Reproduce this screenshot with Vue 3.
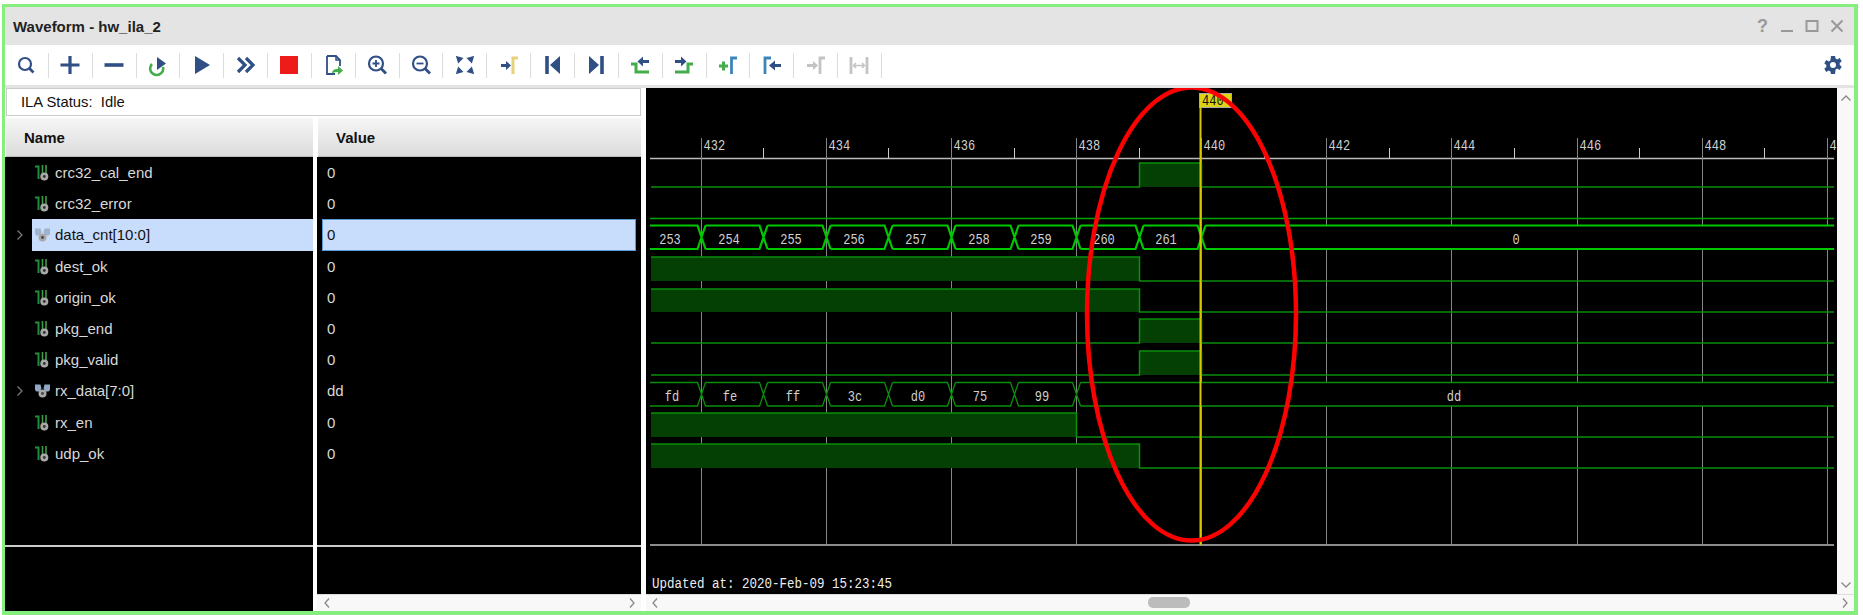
<template>
  <div class="win">
    <div class="titlebar">
      <span class="title">Waveform - hw_ila_2</span>
      <div class="winbtns">
        <span class="help">?</span>
        <svg width="14" height="14" viewBox="0 0 14 14"><path d="M1 12h12" stroke="#999" stroke-width="2" /></svg>
        <svg width="14" height="14" viewBox="0 0 14 14"><rect x="1.5" y="2" width="11" height="10" fill="none" stroke="#999" stroke-width="2" /></svg>
        <svg width="14" height="14" viewBox="0 0 14 14"><path d="M1.5 1.5l11 11M12.5 1.5l-11 11" stroke="#999" stroke-width="2" /></svg>
      </div>
    </div>

    <div class="toolbar">
      <div v-for="t in tools" :key="t.id" class="tool">
        <svg width="24" height="24" viewBox="0 0 24 24" v-html="t.svg"></svg>
      </div>
      <svg class="gear" width="22" height="22" viewBox="0 0 22 22">
        <path
          fill="#2f4f85"
          fill-rule="evenodd"
          d="M9 2h4l.6 2.6 1.7.8 2.4-1.3 2 3.2-2 1.8v1.8l2 1.8-2 3.2-2.4-1.3-1.7.8L13 20H9l-.6-2.6-1.7-.8-2.4 1.3-2-3.2 2-1.8V11.1l-2-1.8 2-3.2 2.4 1.3 1.7-.8zM11 8a3 3 0 1 0 0 6 3 3 0 0 0 0-6z"
        />
      </svg>
    </div>

    <div class="main">
      <div class="left">
        <div class="status">ILA Status:&nbsp; Idle</div>
        <div class="cols">
          <div class="col col-name">
            <div class="head">Name</div>
            <div class="rows">
              <div
                v-for="s in signals"
                :key="s.name"
                class="row"
                :class="{ sel: s.selected }"
              >
                <svg v-if="s.bus" class="chev" width="8" height="12" viewBox="0 0 8 12"><path d="M1.500 1.500L6 6l-4.500 4.500" fill="none" stroke="#777" stroke-width="1.300" /></svg>
                <svg v-if="s.bus" class="sigicon" width="15" height="16" viewBox="0 0 15 16">
                  <path d="M0 1.500h5.500l1 4-2 3H1.500L0 7zM15 1.500H9.500l-1 4 2 3h3L15 7z" :fill="s.selected ? '#9fb3cc' : '#8fa6c4'" />
                  <circle cx="7.500" cy="10.500" r="4" fill="#a8a8a8" />
                  <circle cx="7.500" cy="10.500" r="1.400" fill="#444" />
                </svg>
                <svg v-else class="sigicon" width="15" height="17" viewBox="0 0 15 17">
                  <path d="M0 2.500h3.500V15" fill="none" stroke="#1d8f3a" stroke-width="2" />
                  <path d="M7.500 1v9M11 1v9" stroke="#3f9a4a" stroke-width="1.600" />
                  <circle cx="9.300" cy="12.500" r="4" fill="#a8a8a8" />
                  <circle cx="9.300" cy="12.500" r="1.400" fill="#333" />
                </svg>
                <span class="sname">{{ s.name }}</span>
              </div>
            </div>
            <div class="tail"></div>
          </div>
          <div class="col col-value">
            <div class="head">Value</div>
            <div class="rows">
              <div
                v-for="s in signals"
                :key="s.name"
                class="row"
              >
                <span class="val" :class="{ selval: s.selected }">{{ s.value }}</span>
              </div>
            </div>
            <div class="tail"></div>
            <div class="hscroll value-scroll">
              <span class="arr">
                <svg width="8" height="12" viewBox="0 0 8 12"><path d="M6 1.500L2 6l4 4.500" fill="none" stroke="#888" stroke-width="1.300" /></svg>
              </span>
              <span class="arr">
                <svg width="8" height="12" viewBox="0 0 8 12"><path d="M2 1.500L6 6l-4 4.500" fill="none" stroke="#888" stroke-width="1.300" /></svg>
              </span>
            </div>
          </div>
        </div>
      </div>

      <div class="right">
        <div class="wave-top">
          <svg class="wave" width="1191" height="506" viewBox="646 88 1191 506">
            <rect x="646" y="88" width="1191" height="506" fill="#000" />

            <!-- ruler -->
            <path d="M650 158.500H1834M650 545H1834" stroke="#bbb" stroke-width="1.500" />
            <path
              v-for="t in majors"
              :key="'g' + t"
              :d="`M${xOf(t)} 138V545`"
              stroke="#858585"
              stroke-width="1"
            />
            <path
              v-for="t in minors"
              :key="'m' + t"
              :d="`M${xOf(t)} 148V158`"
              stroke="#ccc"
              stroke-width="1"
            />
            <text
              v-for="t in majors"
              :key="'l' + t"
              :x="xOf(t) + 2"
              y="150"
              class="mono"
              :textLength="t === 450 ? 7.2 : 21.6"
              lengthAdjust="spacingAndGlyphs"
            >{{ t === 450 ? '4' : t }}</text>

            <!-- one bit signals -->
            <g v-for="(w, i) in bits" :key="i">
              <path
                v-for="(r, j) in w.highs"
                :key="j"
                :d="`M${r[0]} ${w.low}V${w.high}H${r[1]}V${w.low}Z`"
                fill="#043f04"
              />
              <path :d="bitPath(w)" fill="none" stroke="#0a8f0a" stroke-width="1.500" />
            </g>
            <path d="M650 218.500H1834" stroke="#00a600" stroke-width="1.500" />

            <!-- buses -->
            <path
              v-for="(p, i) in busFill(225, 249, cntEdges)"
              :key="'cf' + i"
              :d="p"
              fill="#000"
            />
            <path :d="busPath(225.500, 249, cntEdges)" fill="none" stroke="#00c800" stroke-width="2.200" />
            <text
              v-for="l in cntLabels"
              :key="l.t"
              :x="l.x"
              y="244"
              class="mono center"
              :textLength="l.t.length * 7.2"
              lengthAdjust="spacingAndGlyphs"
            >{{ l.t }}</text>

            <path
              v-for="(p, i) in busFill(382, 406, rxEdges)"
              :key="'rf' + i"
              :d="p"
              fill="#000"
            />
            <path :d="busPath(382.500, 406, rxEdges)" fill="none" stroke="#0a8f0a" stroke-width="1.300" />
            <text
              v-for="l in rxLabels"
              :key="l.t"
              :x="l.x"
              y="401"
              class="mono center"
              :textLength="l.t.length * 7.2"
              lengthAdjust="spacingAndGlyphs"
            >{{ l.t }}</text>

            <text
              x="652"
              y="588"
              class="mono updated"
              textLength="240"
              lengthAdjust="spacingAndGlyphs"
            >Updated at: 2020-Feb-09 15:23:45</text>

            <!-- cursor -->
            <rect x="1199.500" y="93.500" width="32" height="14" fill="#dcd414" stroke="#aaa" />
            <text x="1202" y="105" class="mono flag" textLength="21.6" lengthAdjust="spacingAndGlyphs">440</text>
            <path d="M1200.500 107V545" stroke="#d8c800" stroke-width="2" />

            <ellipse
              cx="1191.500"
              cy="314"
              rx="104.500"
              ry="226.500"
              fill="none"
              stroke="#f00"
              stroke-width="4.500"
            />
          </svg>
          <div class="vscroll">
            <svg width="12" height="8" viewBox="0 0 12 8"><path d="M1.500 6.500L6 2l4.500 4.500" fill="none" stroke="#888" stroke-width="1.300" /></svg>
            <svg width="12" height="8" viewBox="0 0 12 8"><path d="M1.500 1.500L6 6l4.500-4.500" fill="none" stroke="#888" stroke-width="1.300" /></svg>
          </div>
        </div>
        <div class="hscroll wave-scroll">
          <span class="arr">
            <svg width="8" height="12" viewBox="0 0 8 12"><path d="M6 1.500L2 6l4 4.500" fill="none" stroke="#888" stroke-width="1.300" /></svg>
          </span>
          <span class="thumb"></span>
          <span class="arr">
            <svg width="8" height="12" viewBox="0 0 8 12"><path d="M2 1.500L6 6l-4 4.500" fill="none" stroke="#888" stroke-width="1.300" /></svg>
          </span>
        </div>
      </div>
    </div>
  </div>
</template>

<script setup>
const navy = '#2f4f85'
const green = '#43ad4b'

const tools = [
  { id: 'search', svg: `<circle cx="11" cy="11" r="6" fill="none" stroke="${navy}" stroke-width="2.200"/><path d="M15.500 15.500l4 4" stroke="${navy}" stroke-width="2.600"/>` },
  { id: 'plus', svg: `<path d="M12 3v18M2.500 12h19" stroke="${navy}" stroke-width="3.200"/>` },
  { id: 'minus', svg: `<path d="M2.500 12h19" stroke="${navy}" stroke-width="3.600"/>` },
  { id: 'rerun', svg: `<path d="M6 11a6.500 6.500 0 1 0 11 3" fill="none" stroke="${green}" stroke-width="2.600"/><path d="M11 4l9 6.500-9 6.500z" fill="${navy}"/>` },
  { id: 'play', svg: `<path d="M5 3l15 9-15 9z" fill="${navy}"/>` },
  { id: 'fast', svg: `<path d="M4 5l7 7-7 7M12 5l7 7-7 7" fill="none" stroke="${navy}" stroke-width="3.200"/>` },
  { id: 'stop', svg: `<rect x="3" y="3" width="18" height="18" fill="#ee1b1b"/>` },
  { id: 'export', svg: `<path d="M6 3h9l4 4v6M6 3v18h8" fill="none" stroke="${navy}" stroke-width="1.800"/><path d="M15 3v4h4" fill="none" stroke="${navy}" stroke-width="1.500"/><path d="M11 21c0-4 2-5 6-5v-3l5 4.500-5 4.500v-3c-2 0-4 0-6 2z" fill="${green}"/>` },
  { id: 'zoomin', svg: `<circle cx="11" cy="10.500" r="7" fill="none" stroke="${navy}" stroke-width="2.200"/><path d="M16 15.500l5 5" stroke="${navy}" stroke-width="2.800"/><path d="M11 7v7M7.500 10.500h7" stroke="${navy}" stroke-width="1.800"/>` },
  { id: 'zoomout', svg: `<circle cx="11" cy="10.500" r="7" fill="none" stroke="${navy}" stroke-width="2.200"/><path d="M16 15.500l5 5" stroke="${navy}" stroke-width="2.800"/><path d="M7.500 10.500h7" stroke="${navy}" stroke-width="1.800"/>` },
  { id: 'fit', svg: `<path d="M4 4l5 1.500L5.500 9zM20 4l-5 1.500L18.500 9zM4 20l5-1.500L5.500 15zM20 20l-5-1.500 3.500-3.500z" fill="${navy}" stroke="${navy}" stroke-width="1.600"/>` },
  { id: 'marker', svg: `<path d="M4 11h5V8l5 4.500L9 17v-3H4z" fill="${navy}"/><path d="M16 21V5h5" fill="none" stroke="#e6d27a" stroke-width="3"/>` },
  { id: 'first', svg: `<path d="M6 3v18" stroke="${navy}" stroke-width="3.600"/><path d="M19 3v18L9 12z" fill="${navy}"/>` },
  { id: 'last', svg: `<path d="M18 3v18" stroke="${navy}" stroke-width="3.600"/><path d="M5 3v18l10-9z" fill="${navy}"/>` },
  { id: 'prevedge', svg: `<path d="M3 11h5v8h13" fill="none" stroke="${green}" stroke-width="3"/><path d="M21 10h-6v3.500L9.500 8.500 15 3.500V7h6z" fill="${navy}"/>` },
  { id: 'nextedge', svg: `<path d="M21 11h-5v8H3" fill="none" stroke="${green}" stroke-width="3"/><path d="M3 7h6V3.500l5.500 5-5.500 5V10H3z" fill="${navy}"/>` },
  { id: 'addmark', svg: `<path d="M3 13h9M7.500 8.500v9" stroke="${green}" stroke-width="3"/><path d="M15.500 21V5H21" fill="none" stroke="#3d85b8" stroke-width="2.800"/>` },
  { id: 'prevmark', svg: `<path d="M5 21V5h6" fill="none" stroke="#3d85b8" stroke-width="2.800"/><path d="M21 11h-6V7.500L9 12.500l6 5V14h6z" fill="${navy}"/>` },
  { id: 'nextmark', svg: `<path d="M3 11h6V8l5 4.500L9 17v-3H3z" fill="#c4c4c4"/><path d="M16 21V5h5" fill="none" stroke="#c4c4c4" stroke-width="2.800"/>` },
  { id: 'span', svg: `<path d="M4 4v17M20 4v17" stroke="#c4c4c4" stroke-width="2.800"/><path d="M7 12.500h10M9 10l-2.500 2.500L9 15M15 10l2.500 2.500L15 15" fill="none" stroke="#c4c4c4" stroke-width="1.500"/>` }
]

const signals = [
  { name: 'crc32_cal_end', value: '0' },
  { name: 'crc32_error', value: '0' },
  { name: 'data_cnt[10:0]', value: '0', bus: true, selected: true },
  { name: 'dest_ok', value: '0' },
  { name: 'origin_ok', value: '0' },
  { name: 'pkg_end', value: '0' },
  { name: 'pkg_valid', value: '0' },
  { name: 'rx_data[7:0]', value: 'dd', bus: true },
  { name: 'rx_en', value: '0' },
  { name: 'udp_ok', value: '0' }
]

const xOf = t => Math.round(700.8 + 62.55 * (t - 432)) + 0.5
const majors = [432, 434, 436, 438, 440, 442, 444, 446, 448, 450]
const minors = [433, 435, 437, 439, 441, 443, 445, 447, 449]

const START = 651
const END = 1834
const x438 = xOf(438)
const x439 = xOf(439)
const x440 = xOf(440)

// high: y of the 1 level, low: y of the 0 level, highs: x ranges at 1
const bits = [
  { high: 163, low: 187, highs: [[x439, x440]] },
  { high: 257, low: 281, highs: [[START, x439]] },
  { high: 289, low: 312, highs: [[START, x439]] },
  { high: 319, low: 343, highs: [[x439, x440]] },
  { high: 351, low: 375, highs: [[x439, x440]] },
  { high: 413, low: 437, highs: [[START, x438]] },
  { high: 444, low: 468, highs: [[START, x439]] }
]

const bitPath = w => {
  let d = `M${START} ${w.low}`
  for (const [a, b] of w.highs) {
    if (a === START) d = `M${a} ${w.high}H${b}V${w.low}`
    else d += `H${a}V${w.high}H${b}V${w.low}`
  }
  return d + `H${END}`
}

const cntEdges = [432, 433, 434, 435, 436, 437, 438, 439, 440].map(xOf)
const rxEdges = [432, 433, 434, 435, 436, 437, 438].map(xOf)

const busPath = (top, bot, edges) => {
  const s = 4
  let d = ''
  let prev = 650
  for (const e of edges) {
    d += `M${prev} ${top}H${e - s}L${e + s} ${bot}M${prev} ${bot}H${e - s}L${e + s} ${top}`
    prev = e + s
  }
  return d + `M${prev} ${top}H${END}M${prev} ${bot}H${END}`
}

// black band behind a bus so the grid doesn't show through the values
const busFill = (top, bot, edges) => {
  const s = 4
  const mid = (top + bot) / 2
  const out = []
  let prev = 650
  for (const e of edges) {
    out.push(`M${prev} ${top}H${e - s}L${e} ${mid}L${e - s} ${bot}H${prev}Z`)
    prev = e + s
  }
  out.push(`M${prev} ${top}H${END}V${bot}H${prev}Z`)
  return out
}

const cntLabels = [
  { t: '253', x: 670 }, { t: '254', x: 729 }, { t: '255', x: 791 },
  { t: '256', x: 854 }, { t: '257', x: 916 }, { t: '258', x: 979 },
  { t: '259', x: 1041 }, { t: '260', x: 1104 }, { t: '261', x: 1166 },
  { t: '0', x: 1516 }
]
const rxLabels = [
  { t: 'fd', x: 672 }, { t: 'fe', x: 730 }, { t: 'ff', x: 793 },
  { t: '3c', x: 855 }, { t: 'd0', x: 918 }, { t: '75', x: 980 },
  { t: '99', x: 1042 }, { t: 'dd', x: 1454 }
]
</script>

<style scoped>
.win {
  box-sizing: border-box;
  height: 611px;
  width: 1856px;
  margin: 4px 0 0 2px;
  border: solid #85ee7f;
  border-width: 3px 4px 4px 3px;
  display: flex;
  flex-direction: column;
  background: #fff;
  font-family: "Liberation Sans", Arial, sans-serif;
  color: #111;
}
.titlebar {
  height: 38px;
  flex: none;
  background: #e4e4e4;
  display: flex;
  align-items: center;
  justify-content: space-between;
  padding: 0 10px 0 8px;
}
.title {
  font-size: 15px;
  font-weight: 700;
  color: #222;
}
.winbtns {
  display: flex;
  align-items: center;
  gap: 11px;
}
.help {
  color: #999;
  font-size: 18px;
  font-weight: 700;
  margin-right: 1px;
}
.toolbar {
  height: 43px;
  flex: none;
  display: flex;
  align-items: center;
  padding: 0 10px 0 0;
  box-sizing: border-box;
  border-bottom: 3px solid #e3e3e3;
}
.tool {
  box-sizing: border-box;
  width: 43.85px;
  height: 25px;
  display: flex;
  align-items: center;
  justify-content: center;
  border-right: 1.5px solid #dcdcdc;
}
.gear {
  margin-left: auto;
}
.main {
  flex: 1;
  display: flex;
  min-height: 0;
}
.left {
  width: 636px;
  flex: none;
  display: flex;
  flex-direction: column;
}
.status {
  box-sizing: border-box;
  height: 28px;
  margin: 0 0 2px 1px;
  width: 635px;
  border: 1px solid #ccc;
  padding-left: 14px;
  display: flex;
  align-items: center;
  font-size: 14.800px;
}
.cols {
  flex: 1;
  display: flex;
  gap: 4px;
  min-height: 0;
}
.col {
  display: flex;
  flex-direction: column;
}
.col-name {
  width: 308px;
}
.col-value {
  width: 324px;
}
.head {
  height: 39px;
  flex: none;
  box-sizing: border-box;
  margin-left: 1px;
  padding-left: 18px;
  display: flex;
  align-items: center;
  font-size: 15px;
  font-weight: 700;
  background: linear-gradient(#f6f6f6, #dcdcdc);
  border-bottom: 1px solid #bbb;
}
.rows {
  height: 388px;
  flex: none;
  background: #000;
  display: flex;
  flex-direction: column;
}
.row {
  height: 31.2px;
  flex: none;
  display: flex;
  align-items: center;
  position: relative;
  padding-left: 30px;
  font-size: 15px;
  color: #d8d8d8;
}
.col-value .row {
  padding-left: 5px;
}
.col-name .row.sel {
  background: #c8dcfb;
  margin-left: 27px;
  padding-left: 3px;
  color: #111;
}
.chev {
  position: absolute;
  left: 11px;
}
.col-name .row.sel .chev {
  left: -16px;
}
.sigicon {
  flex: none;
  margin-right: 5px;
}
.val {
  flex: 1;
  padding-left: 5px;
  height: 100%;
  display: flex;
  align-items: center;
  box-sizing: border-box;
}
.selval {
  background: #c8dcfb;
  border: 1px solid #5b9bd5;
  color: #111;
  padding-left: 4px;
  margin-right: 5px;
}
.tail {
  flex: 1;
  background: #000;
  border-top: 2px solid #ccc;
}
.hscroll {
  height: 17px;
  flex: none;
  box-sizing: border-box;
  background: #f8f8f8;
  border-top: 1px solid #ddd;
  display: flex;
  align-items: center;
  justify-content: space-between;
  padding: 0 5px;
}
.value-scroll {
  padding: 0 5px 0 6px;
}
.arr {
  display: flex;
}
.right {
  flex: 1;
  margin-left: 5px;
  display: flex;
  flex-direction: column;
  min-width: 0;
}
.wave-top {
  display: flex;
  height: 506px;
}
.wave {
  display: block;
  flex: none;
}
.mono {
  font-family: "Liberation Mono", monospace;
  font-size: 14.500px;
  fill: #d0d0d0;
}
.updated {
  fill: #eee;
}
.center {
  text-anchor: middle;
}
.flag {
  fill: #111;
}
.vscroll {
  flex: 1;
  background: #f8f8f8;
  display: flex;
  flex-direction: column;
  justify-content: space-between;
  align-items: center;
  padding: 6px 0 5px;
}
.wave-scroll {
  position: relative;
}
.thumb {
  position: absolute;
  left: 502px;
  top: 2px;
  width: 42px;
  height: 11px;
  border-radius: 5px;
  background: #bcbcbc;
}
</style>
